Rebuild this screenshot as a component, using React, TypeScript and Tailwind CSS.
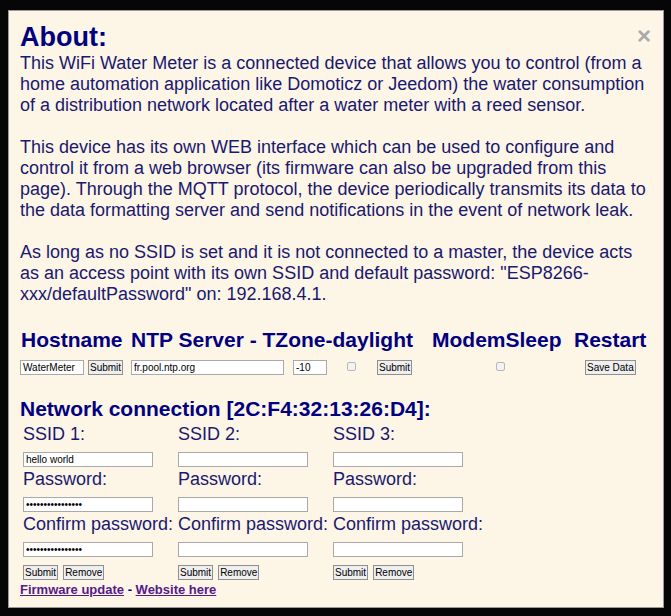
const font = { fontFamily: '"Liberation Sans", Arial, sans-serif' };

function SmallInput({ w, value, type = "text" }: { w: string; value?: string; type?: string }) {
  return (
    <input
      type={type}
      defaultValue={value}
      className={`${w} block h-[15px] border border-[#a9a9a9] bg-white px-[2px] text-[10px] leading-[13px] text-black outline-none`}
    />
  );
}

function SmallButton({ label }: { label: string }) {
  return (
    <button className="block h-[15px] border border-[#8f8f8f] bg-[#efefef] px-px text-[10px] leading-[13px] text-black">
      {label}
    </button>
  );
}

function Check() {
  return <span className="block h-[9px] w-[9px] rounded-[2px] border border-[#b8b8b8] bg-[#f3f3f3]" />;
}

function NetColumn({ ssid, value, pass }: { ssid: string; value?: string; pass?: string }) {
  return (
    <div className="flex w-[155px] flex-col items-start">
      <div className="h-[21px] text-[18px] leading-[21px]">{ssid}</div>
      <div className="mb-[2px] mt-[7px]">
        <SmallInput w="w-[130px]" value={value} />
      </div>
      <div className="h-[21px] text-[18px] leading-[21px]">Password:</div>
      <div className="mb-[2px] mt-[7px]">
        <SmallInput w="w-[130px]" value={pass} type="password" />
      </div>
      <div className="h-[21px] whitespace-nowrap text-[18px] leading-[21px]">Confirm password:</div>
      <div className="mb-[2px] mt-[7px]">
        <SmallInput w="w-[130px]" value={pass} type="password" />
      </div>
      <div className="mt-[6px] flex gap-[5px]">
        <SmallButton label="Submit" />
        <SmallButton label="Remove" />
      </div>
    </div>
  );
}

export default function App() {
  return (
    <div className="h-[616px] w-full bg-[#060606] pl-[8px] pt-[10px]" style={font}>
      <div className="relative h-[598px] w-[656px] border border-[#9a9a9a] bg-[#fdf5e6] px-[11px] pt-[11px] text-[#191970]">
        <span className="absolute right-[12px] top-[10px] text-[24px] font-bold leading-[30px] text-[#aaaaaa]">×</span>

        <h1 className="text-[27px] font-bold leading-[31px] text-[#000080]">About:</h1>
        <div className="text-[18px] leading-[21px]">
          <p>
            This WiFi Water Meter is a connected device that allows you to control (from a home automation
            application like Domoticz or Jeedom) the water consumption of a distribution network located after a
            water meter with a reed sensor.
          </p>
          <p className="mt-[21px]">
            This device has its own WEB interface which can be used to configure and control it from a web browser
            (its firmware can also be upgraded from this page). Through the MQTT protocol, the device periodically
            transmits its data to the data formatting server and send notifications in the event of network leak.
          </p>
          <p className="mt-[21px]">
            As long as no SSID is set and it is not connected to a master, the device acts as an access point with
            its own SSID and default password: "ESP8266-xxx/defaultPassword" on: 192.168.4.1.
          </p>
        </div>

        <div className="mt-[23px] grid grid-cols-[110px_301px_142px_80px] pl-[1px] text-[#000080]">
          <div className="text-[21px] font-bold leading-[24px]">Hostname</div>
          <div className="text-[21px] font-bold leading-[24px]">NTP Server - TZone-daylight</div>
          <div className="text-[21px] font-bold leading-[24px]">ModemSleep</div>
          <div className="text-[21px] font-bold leading-[24px]">Restart</div>

          <div className="mt-[8px] flex items-center gap-[4px] -ml-[1px]">
            <SmallInput w="w-[64px]" value="WaterMeter" />
            <SmallButton label="Submit" />
          </div>
          <div className="mt-[8px] flex items-center">
            <SmallInput w="w-[153px]" value="fr.pool.ntp.org" />
            <div className="ml-[9px]">
              <SmallInput w="w-[34px]" value="-10" />
            </div>
            <div className="ml-[20px] -mt-[3px]">
              <Check />
            </div>
            <div className="ml-[21px]">
              <SmallButton label="Submit" />
            </div>
          </div>
          <div className="mt-[8px] flex items-center pl-[64px]">
            <div className="-mt-[3px]">
              <Check />
            </div>
          </div>
          <div className="mt-[8px] flex items-center pl-[11px]">
            <SmallButton label="Save Data" />
          </div>
        </div>

        <h2 className="mt-[22px] text-[21px] font-bold leading-[24px] text-[#000080]">
          Network connection [2C:F4:32:13:26:D4]:
        </h2>
        <div className="mt-[3px] flex pl-[3px]">
          <NetColumn ssid="SSID 1:" value="hello world" pass="abcdefghijklmnop" />
          <NetColumn ssid="SSID 2:" />
          <NetColumn ssid="SSID 3:" />
        </div>

        <div className="mt-[2px] text-[13px] font-bold leading-[15px]">
          <a href="#" className="text-[#551a8b] underline">
            Firmware update
          </a>
          <span className="text-[#000080]"> - </span>
          <a href="#" className="text-[#551a8b] underline">
            Website here
          </a>
        </div>
      </div>
    </div>
  );
}
